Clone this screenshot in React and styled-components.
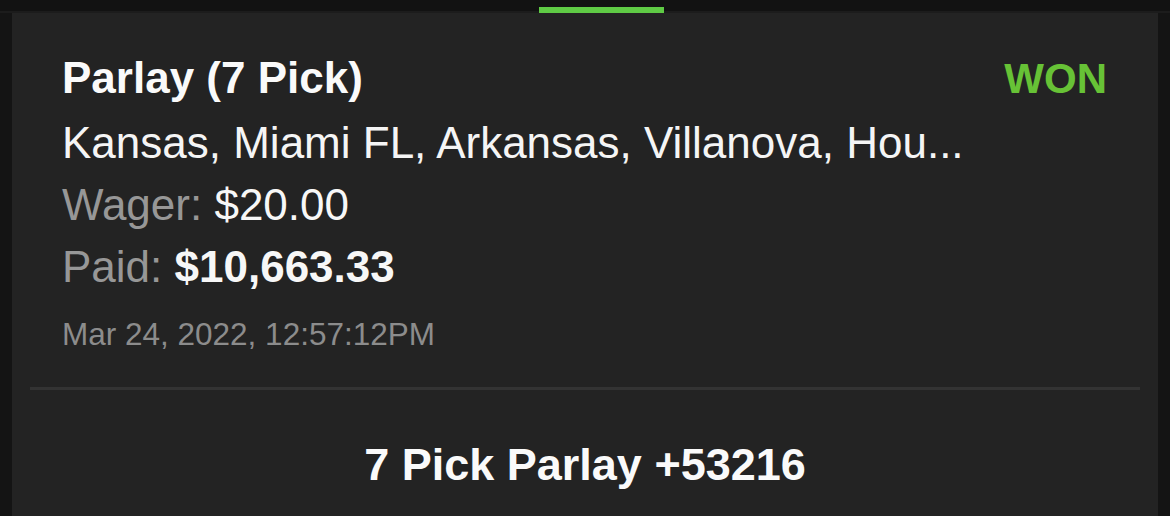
import React from "react";
import styled, { createGlobalStyle } from "styled-components";

const GlobalStyle = createGlobalStyle`
  html, body {
    margin: 0;
    padding: 0;
    background: #141414;
  }
  body {
    font-family: "Liberation Sans", Arial, sans-serif;
    -webkit-font-smoothing: antialiased;
  }
`;

const Screen = styled.div`
  width: 1170px;
  height: 516px;
  display: flex;
  flex-direction: column;
  background: #141414;
  overflow: hidden;
`;

const TabStrip = styled.div`
  height: 13px;
  flex-shrink: 0;
  background: linear-gradient(#121212 0 11px, #1c1c1c 11px 13px);
  padding-top: 7px;
  padding-left: 539px;
  box-sizing: border-box;
`;

const Indicator = styled.div`
  width: 125px;
  height: 7px;
  background: #5fcb45;
`;

const Card = styled.div`
  flex: 1;
  margin: 0 12px;
  padding: 0 18px;
  background: #232323;
`;

const Details = styled.div`
  padding: 33px 33px 33px 32px;
`;

const HeaderRow = styled.div`
  display: flex;
  justify-content: space-between;
  align-items: baseline;
`;

const Title = styled.div`
  font-size: 44px;
  line-height: 64px;
  font-weight: 700;
  color: #fafafa;
`;

const Status = styled.div`
  font-size: 42px;
  font-weight: 700;
  color: #67c236;
`;

const Line = styled.div`
  font-size: 44px;
  line-height: 62px;
  color: #f5f5f5;
  white-space: nowrap;
  margin-top: ${(p) => p.$gap || 0}px;
`;

const Label = styled.span`
  color: #979797;
`;

const Value = styled.span`
  color: #f7f7f7;
  font-weight: ${(p) => (p.$strong ? 600 : 400)};
`;

const Timestamp = styled.div`
  margin-top: 16px;
  font-size: 31.5px;
  line-height: 40px;
  color: #8c8c8c;
`;

const Divider = styled.div`
  height: 3px;
  background: #333333;
`;

const Footer = styled.div`
  padding-top: 47px;
  text-align: center;
  font-size: 45px;
  line-height: 56px;
  font-weight: 700;
  color: #fafafa;
`;

export default function App() {
  return (
    <>
      <GlobalStyle />
      <Screen>
        <TabStrip>
          <Indicator />
        </TabStrip>
        <Card>
          <Details>
            <HeaderRow>
              <Title>Parlay (7 Pick)</Title>
              <Status>WON</Status>
            </HeaderRow>
            <Line $gap={2}>Kansas, Miami FL, Arkansas, Villanova, Hou...</Line>
            <Line>
              <Label>Wager:</Label> <Value>$20.00</Value>
            </Line>
            <Line>
              <Label>Paid:</Label> <Value $strong>$10,663.33</Value>
            </Line>
            <Timestamp>Mar 24, 2022, 12:57:12PM</Timestamp>
          </Details>
          <Divider />
          <Footer>7 Pick Parlay +53216</Footer>
        </Card>
      </Screen>
    </>
  );
}
